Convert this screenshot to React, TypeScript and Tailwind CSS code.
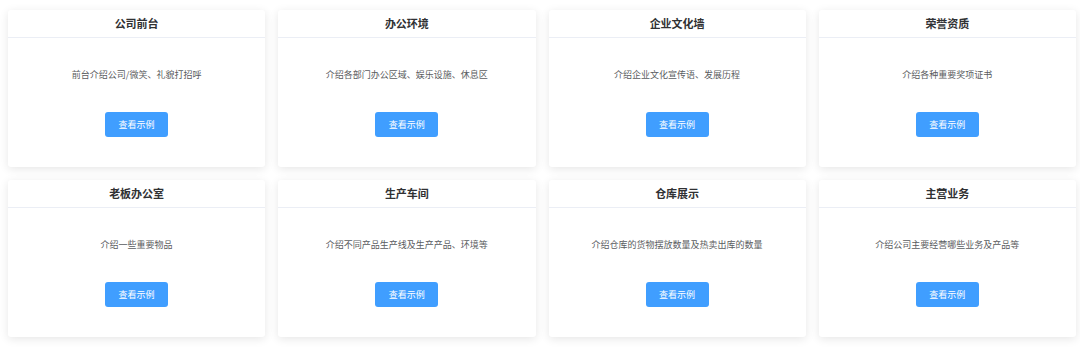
const cards = [
  { title: "公司前台", desc: "前台介绍公司/微笑、礼貌打招呼" },
  { title: "办公环境", desc: "介绍各部门办公区域、娱乐设施、休息区" },
  { title: "企业文化墙", desc: "介绍企业文化宣传语、发展历程" },
  { title: "荣誉资质", desc: "介绍各种重要奖项证书" },
  { title: "老板办公室", desc: "介绍一些重要物品" },
  { title: "生产车间", desc: "介绍不同产品生产线及生产产品、环境等" },
  { title: "仓库展示", desc: "介绍仓库的货物摆放数量及热卖出库的数量" },
  { title: "主营业务", desc: "介绍公司主要经营哪些业务及产品等" },
];

function SceneCard({ title, desc }: { title: string; desc: string }) {
  return (
    <div className="h-[157px] bg-white rounded-[3px] shadow-[0_2px_10px_0_rgba(0,0,0,0.1)] flex flex-col">
      <div className="h-[28px] border-b border-[#ebeef5] flex items-center justify-center text-[11px] font-semibold text-[#303133]">
        {title}
      </div>
      <div className="flex flex-col items-center pt-[31px]">
        <p className="text-[9px] leading-[12px] text-[#5a5c60]">{desc}</p>
        <button className="mt-[31px] w-[63px] h-[25px] rounded-[3px] bg-[#409eff] text-white text-[9px] flex items-center justify-center">
          查看示例
        </button>
      </div>
    </div>
  );
}

export default function App() {
  return (
    <div
      className="w-[1080px] h-[350px] bg-white pl-2 pr-1 pt-[10px]"
      style={{ fontFamily: '"Noto Sans CJK SC", "Liberation Sans", sans-serif' }}
    >
      <div className="grid grid-cols-4 gap-[13px]">
        {cards.map((c) => (
          <SceneCard key={c.title} title={c.title} desc={c.desc} />
        ))}
      </div>
    </div>
  );
}
